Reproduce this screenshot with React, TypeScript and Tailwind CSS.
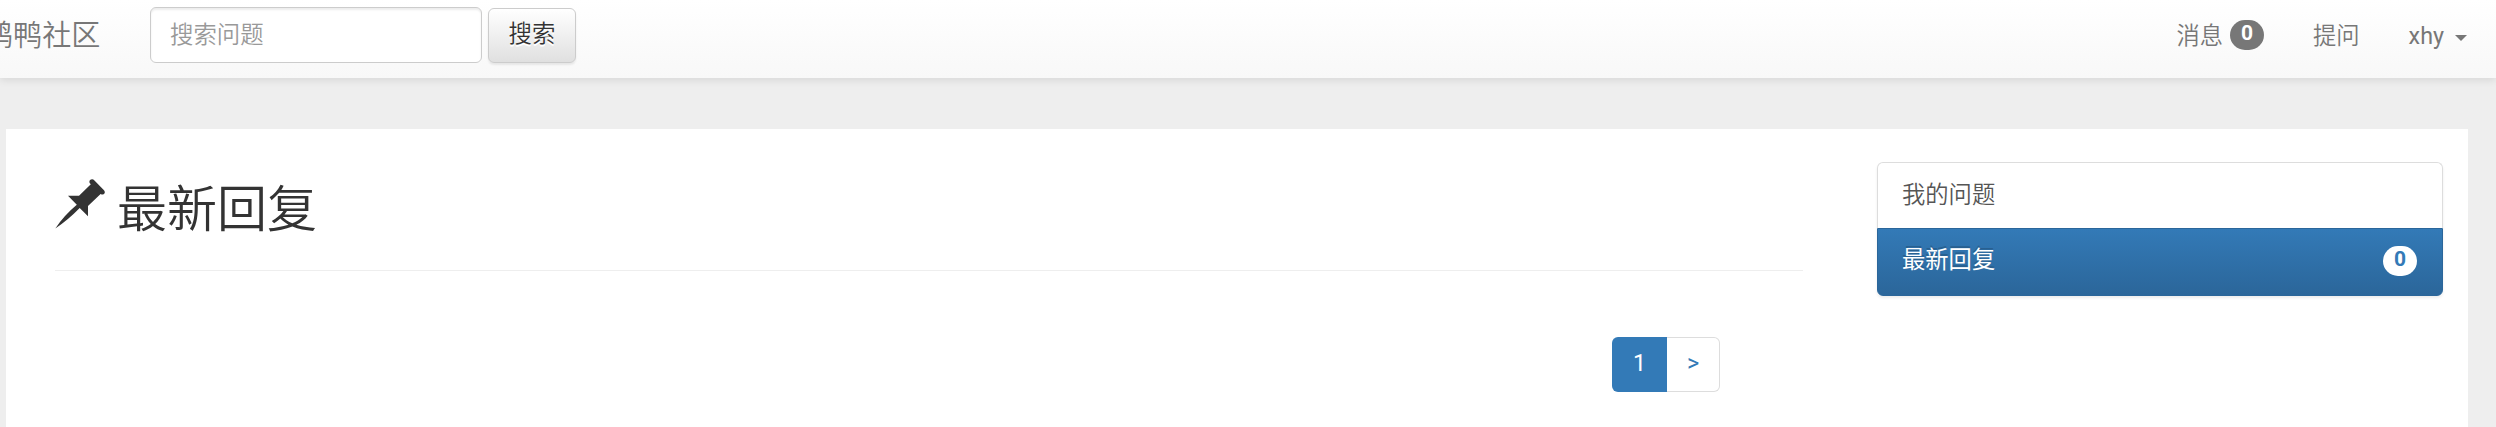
const sans = "font-['Roboto','Noto_Sans_CJK_SC',sans-serif]";

function Navbar() {
  return (
    <nav className="relative flex h-[78px] items-start justify-between bg-linear-to-b from-white to-[#f8f8f8] shadow-[0_2px_8px_rgba(0,0,0,0.1)]">
      <div className="flex items-start">
        <a className="-ml-[16px] flex h-[73px] w-[166px] items-center whitespace-nowrap text-[29.1px] font-[350] text-[#777]">鹈鸭社区</a>
        <form className="flex pt-[7px]">
          <input
            placeholder="搜索问题"
            className="h-[56px] w-[332px] rounded-[6px] border border-[#ccc] bg-white px-[19px] pb-px text-[23.4px] font-[350] shadow-[inset_0_2px_2px_rgba(0,0,0,0.075)] placeholder:text-[#999]"
          />
          <button className="mt-[1px] ml-[6px] h-[55px] w-[88px] rounded-[6px] border border-[#ccc] bg-linear-to-b from-white to-[#e0e0e0] pb-px text-[23.4px] font-[350] text-[#333] shadow-[0_2px_2px_rgba(0,0,0,0.075)] [text-shadow:0_2px_0_#fff]">搜索</button>
        </form>
      </div>
      <div className="flex h-[72px] items-center pr-[29px] text-[23.3px] font-[350] text-[#777]">
        <a className="flex items-center">
          消息
          <span className="ml-[7px] flex h-[30px] w-[34px] -translate-y-px items-center justify-center rounded-[16px] bg-[#777] pb-[2px] text-[21px] font-bold text-white">0</span>
        </a>
        <a className="ml-[49px]">提问</a>
        <a className="ml-[49px] flex items-center font-normal">
          xhy
          <span className="mt-[3px] ml-[11px] border-x-[6px] border-t-[6px] border-x-transparent border-t-[#777]" />
        </a>
      </div>
    </nav>
  );
}

function Pushpin() {
  return (
    <svg viewBox="0 0 50 50" className="mt-[-10px] h-[50px] w-[50px] fill-[#333]">
      <path d="M34.4 3.2 Q34.2 0.2 37.2 0.2 Q38.4 0.3 39.2 1.2 L49 11.2 Q50.2 12.8 49.6 14.2 Q48.4 16.4 45.6 15 L33 27 V37.2 L24.7 29 Q13 41 .3 49.5 Q9 36.5 21.8 25.8 L13 16.8 H24 L35.8 5.2 Q34.6 4.4 34.4 3.2Z" />
    </svg>
  );
}

export default function App() {
  return (
    <div className={`h-[427px] overflow-hidden bg-[#eee] ${sans}`}>
      <Navbar />
      <main className="mt-[51px] mr-[28px] ml-[6px] flex h-[298px] bg-white">
        <section className="ml-[49px] w-[1748px]">
          <h1 className="flex h-[142px] items-center border-b border-[#eee] pt-[18px] text-[50px] leading-none text-[#333]">
            <Pushpin />
            <span className="ml-[12px] pt-[3px] font-[350]">最新回复</span>
          </h1>
          <div className="mt-[66px] flex justify-end pr-[83px] text-[23.3px]">
            <a className="flex h-[55px] w-[55px] items-center justify-center rounded-l-[6px] bg-[#337ab7] pb-[3px] text-white">1</a>
            <a className="flex h-[55px] w-[53px] items-center justify-center rounded-r-[6px] border border-l-0 border-[#ddd] pb-[3px] text-[#337ab7]">&gt;</a>
          </div>
        </section>
        <aside className="mt-[33px] ml-[74px] h-[134px] w-[566px] rounded-[6px] text-[23.3px] font-[350] shadow-[0_2px_3px_rgba(0,0,0,0.075)]">
          <a className="flex h-[66px] items-center rounded-t-[6px] border border-b-0 border-[#ddd] pb-px pl-[24px] text-[#555]">我的问题</a>
          <a className="flex h-[68px] items-center justify-between rounded-b-[6px] border border-[#2b669a] bg-linear-to-b from-[#337ab7] to-[#2b669a] pr-[25px] pb-[3px] pl-[24px] font-normal text-white [text-shadow:0_-2px_0_#286090]">
            最新回复
            <span className="flex h-[30px] w-[34px] items-center justify-center rounded-[16px] bg-white pb-[2px] text-[21px] font-bold text-[#337ab7] [text-shadow:none]">0</span>
          </a>
        </aside>
      </main>
    </div>
  );
}
